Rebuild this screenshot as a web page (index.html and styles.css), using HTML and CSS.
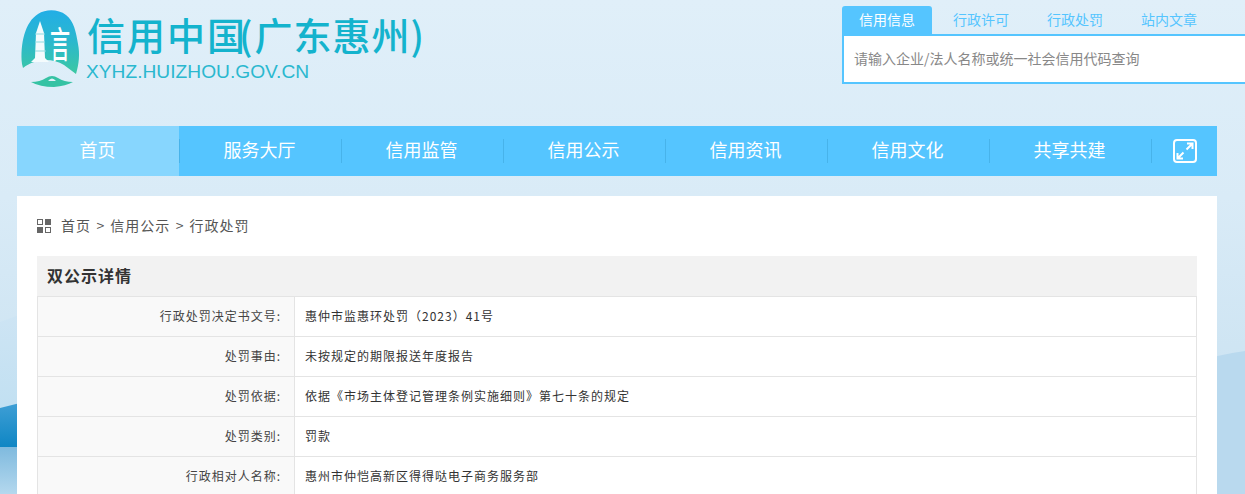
FILE: index.html
```html
<!DOCTYPE html>
<html lang="zh-CN">
<head>
<meta charset="utf-8">
<title>信用中国(广东惠州)</title>
<link rel="stylesheet" href="styles.css">
</head>
<body>
<svg class="backdrop" width="1245" height="494" viewBox="0 0 1245 494" aria-hidden="true">
  <defs>
    <linearGradient id="skyLeft" x1="0" y1="0" x2="0" y2="1">
      <stop offset="0" stop-color="#cfe5f4"/>
      <stop offset="1" stop-color="#b7dcf0"/>
    </linearGradient>
    <linearGradient id="deep" x1="0" y1="0" x2="0" y2="1">
      <stop offset="0" stop-color="#3f9fd5"/>
      <stop offset="1" stop-color="#0f86c4"/>
    </linearGradient>
    <linearGradient id="water" x1="0" y1="0" x2="0" y2="1">
      <stop offset="0" stop-color="#7fbade"/>
      <stop offset="1" stop-color="#b4d8ee"/>
    </linearGradient>
  </defs>
  <path d="M0 322 L60 300 L60 494 L0 494Z" fill="url(#skyLeft)"/>
  <path d="M0 408 L20 403 L20 447 L0 447Z" fill="url(#deep)"/>
  <rect x="0" y="447" width="20" height="47" fill="url(#water)"/>
  <path d="M1190 364 Q1215 355 1245 351 L1245 494 L1190 494Z" fill="#b9d9ee"/>
</svg>
<div class="page">
  <header class="top">
    <a class="logo" href="#">
      <svg class="logo-mark" width="66" height="82" viewBox="0 0 66 82">
        <defs>
          <linearGradient id="ink" x1="0" y1="0" x2="0" y2="1">
            <stop offset="0" stop-color="#22aee6"/>
            <stop offset="0.5" stop-color="#2cb8cc"/>
            <stop offset="1" stop-color="#3cc8a2"/>
          </linearGradient>
        </defs>
        <path d="M2 56 C0 36 5 14 18 6 C26 1 38 1 46 7 C54 13 56 24 58 36 C60 46 59 56 56 66 L44 57 C32 50 16 50 3 60 Z" fill="url(#ink)"/>
        <path d="M20 13 L22 19 L24 25 L25 50 L29 54 L11 54 L15 50 L16 25 L18 19Z" fill="#f4fbfd"/>
        <path d="M15 26H25M15 34H25M15 43H26" stroke="#8fdbe0" stroke-width="1"/>
        <text class="logo-glyph" transform="translate(30 50) scale(.8 1.45)">言</text>
        <path d="M11 74 Q20 74 26 70 Q32 66 38 70 Q44 74 53 74 Q46 78 34 79 Q20 79 11 74Z" fill="#35c2a3"/>
        <path d="M28 73 Q32 68 36 73Z" fill="#e3f1f9"/>
      </svg>
      <div class="logo-text">
        <div class="logo-cn">信用中国<span class="paren-open">(</span><span class="logo-city">广东惠州</span>)</div>
        <div class="logo-en">XYHZ.HUIZHOU.GOV.CN</div>
      </div>
    </a>
    <div class="search">
      <ul class="tabs">
        <li class="tab tab-on">信用信息</li>
        <li class="tab">行政许可</li>
        <li class="tab">行政处罚</li>
        <li class="tab">站内文章</li>
      </ul>
      <div class="search-box">
        <input class="search-input" type="text" placeholder="请输入企业/法人名称或统一社会信用代码查询">
      </div>
    </div>
  </header>

  <nav class="nav">
    <a class="nav-item nav-on" href="#">首页</a>
    <a class="nav-item" href="#">服务大厅</a>
    <a class="nav-item" href="#">信用监管</a>
    <a class="nav-item" href="#">信用公示</a>
    <a class="nav-item" href="#">信用资讯</a>
    <a class="nav-item" href="#">信用文化</a>
    <a class="nav-item" href="#">共享共建</a>
    <a class="nav-icon" href="#" aria-label="展开">
      <svg width="24" height="24" viewBox="0 0 24 24" fill="none" stroke="#fff" stroke-width="2">
        <rect x="1" y="1" width="22" height="22" rx="3"/>
        <path d="M13.5 10.5 L19 5 M14 4.5 H19.5 V10"/>
        <path d="M10.5 13.5 L5 19 M10 19.5 H4.5 V14"/>
      </svg>
    </a>
  </nav>

  <main class="content">
    <div class="crumbs">
      <span class="crumb-icon"><i class="sq"></i><i class="sq sq-fill"></i><i class="sq sq-fill"></i><i class="sq"></i></span>
      <span class="crumb-text">首页<span class="crumb-sep">&gt;</span>信用公示<span class="crumb-sep">&gt;</span>行政处罚</span>
    </div>
    <section class="detail">
      <h2 class="detail-title">双公示详情</h2>
      <div class="row"><div class="label">行政处罚决定书文号:</div><div class="value">惠仲市监惠环处罚（2023）41号</div></div>
      <div class="row"><div class="label">处罚事由:</div><div class="value">未按规定的期限报送年度报告</div></div>
      <div class="row"><div class="label">处罚依据:</div><div class="value">依据《市场主体登记管理条例实施细则》第七十条的规定</div></div>
      <div class="row"><div class="label">处罚类别:</div><div class="value">罚款</div></div>
      <div class="row"><div class="label">行政相对人名称:</div><div class="value">惠州市仲恺高新区得得哒电子商务服务部</div></div>
    </section>
  </main>
</div>
</body>
</html>
```
FILE: styles.css
```css
* { box-sizing: border-box; }
html, body { margin: 0; padding: 0; height: 100%; overflow: hidden; }
body {
  background: linear-gradient(180deg, #e0eff9 0%, #d9ebf7 40%, #cfe5f3 70%, #c6e1f1 100%);
  font-family: "Noto Sans CJK SC", "Liberation Sans", sans-serif;
  color: #333;
  position: relative;
}
a { text-decoration: none; color: inherit; }
ul { list-style: none; margin: 0; padding: 0; }

.backdrop { position: absolute; left: 0; top: 0; z-index: 0; }

.page { position: relative; z-index: 1; width: 1200px; margin-left: 17px; }

.top { display: flex; justify-content: space-between; height: 126px; }

.logo { display: flex; align-items: flex-start; padding: 8px 0 0 3px; }
.logo-mark { flex: none; }
.logo-glyph { font-size: 25px; fill: #fff; font-family: "Noto Sans CJK SC", sans-serif; font-weight: 500; }
.logo-text { margin-left: 1px; }
.logo-cn {
  font-size: 38px;
  line-height: 44px;
  margin-top: 4px;
  letter-spacing: 2px;
  font-weight: 500;
  color: #14b3cd;
  white-space: nowrap;
}
.paren-open { margin-left: -8px; }
.logo-city { letter-spacing: 1px; }
.logo-en {
  font-family: "Liberation Sans", sans-serif;
  font-size: 19.2px;
  line-height: 22px;
  margin-top: 5px;
  margin-left: -1px;
  color: #2ab8cf;
}

.search { width: 420px; margin-left: auto; margin-right: -45px; padding-top: 6px; flex: none; }
.tabs { display: flex; gap: 4px; height: 28px; }
.tab {
  width: 90px;
  text-align: center;
  font-size: 14px;
  line-height: 27px;
  color: #55c5ff;
  border-radius: 3px 3px 0 0;
}
.tab-on { background: #55c5ff; color: #fff; }
.search-box { height: 50px; border: 2px solid #55c5ff; background: #fff; }
.search-input {
  display: block;
  width: 100%;
  height: 44px;
  border: 0;
  outline: 0;
  padding: 0 10px;
  background: transparent;
  font: 14px "Noto Sans CJK SC", sans-serif;
  color: #888;
}
.search-input::placeholder { color: #888; opacity: 1; }

.nav { display: flex; height: 50px; background: #55c5ff; }
.nav-item {
  position: relative;
  width: 162px;
  padding-right: 1px;
  text-align: center;
  font-size: 18px;
  line-height: 47px;
  color: #fff;
}
.nav-item::after {
  content: "";
  position: absolute;
  right: -1px;
  top: 13px;
  width: 1px;
  height: 24px;
  background: #47b3ea;
}
.nav-on { background: #87d6fe; }
.nav-icon { flex: 1; display: flex; align-items: center; justify-content: center; padding-left: 2px; }

.content { margin-top: 20px; padding: 20px; background: #fff; height: 400px; }

.crumbs { display: flex; align-items: center; height: 20px; }
.crumb-icon { display: grid; grid-template-columns: 6px 6px; gap: 2px; width: 14px; }
.sq { display: block; width: 6px; height: 6px; border: 1px solid #666; }
.sq-fill { background: #666; }
.crumb-text { margin: 0 0 2px 10px; font-size: 14px; line-height: 18px; letter-spacing: 1px; color: #555; white-space: nowrap; }
.crumb-sep { margin: 0 5px 0 5.5px; }

.detail { margin-top: 20px; }
.detail-title {
  margin: 0;
  height: 41px;
  padding-left: 10px;
  font-size: 16px;
  line-height: 38px;
  letter-spacing: 1px;
  font-weight: 700;
  color: #333;
  background: #f2f2f2;
  border-bottom: 1px solid #e4e4e4;
}
.row {
  display: flex;
  height: 40px;
  font-size: 12px;
  letter-spacing: 1px;
  line-height: 38px;
  border: 1px solid #e4e4e4;
  border-top: 0;
}
.label { width: 257px; padding-right: 13px; text-align: right; background: #f9f9f9; border-right: 1px solid #e4e4e4; flex: none; color: #444; }
.value { padding-left: 10px; color: #333; }
```
